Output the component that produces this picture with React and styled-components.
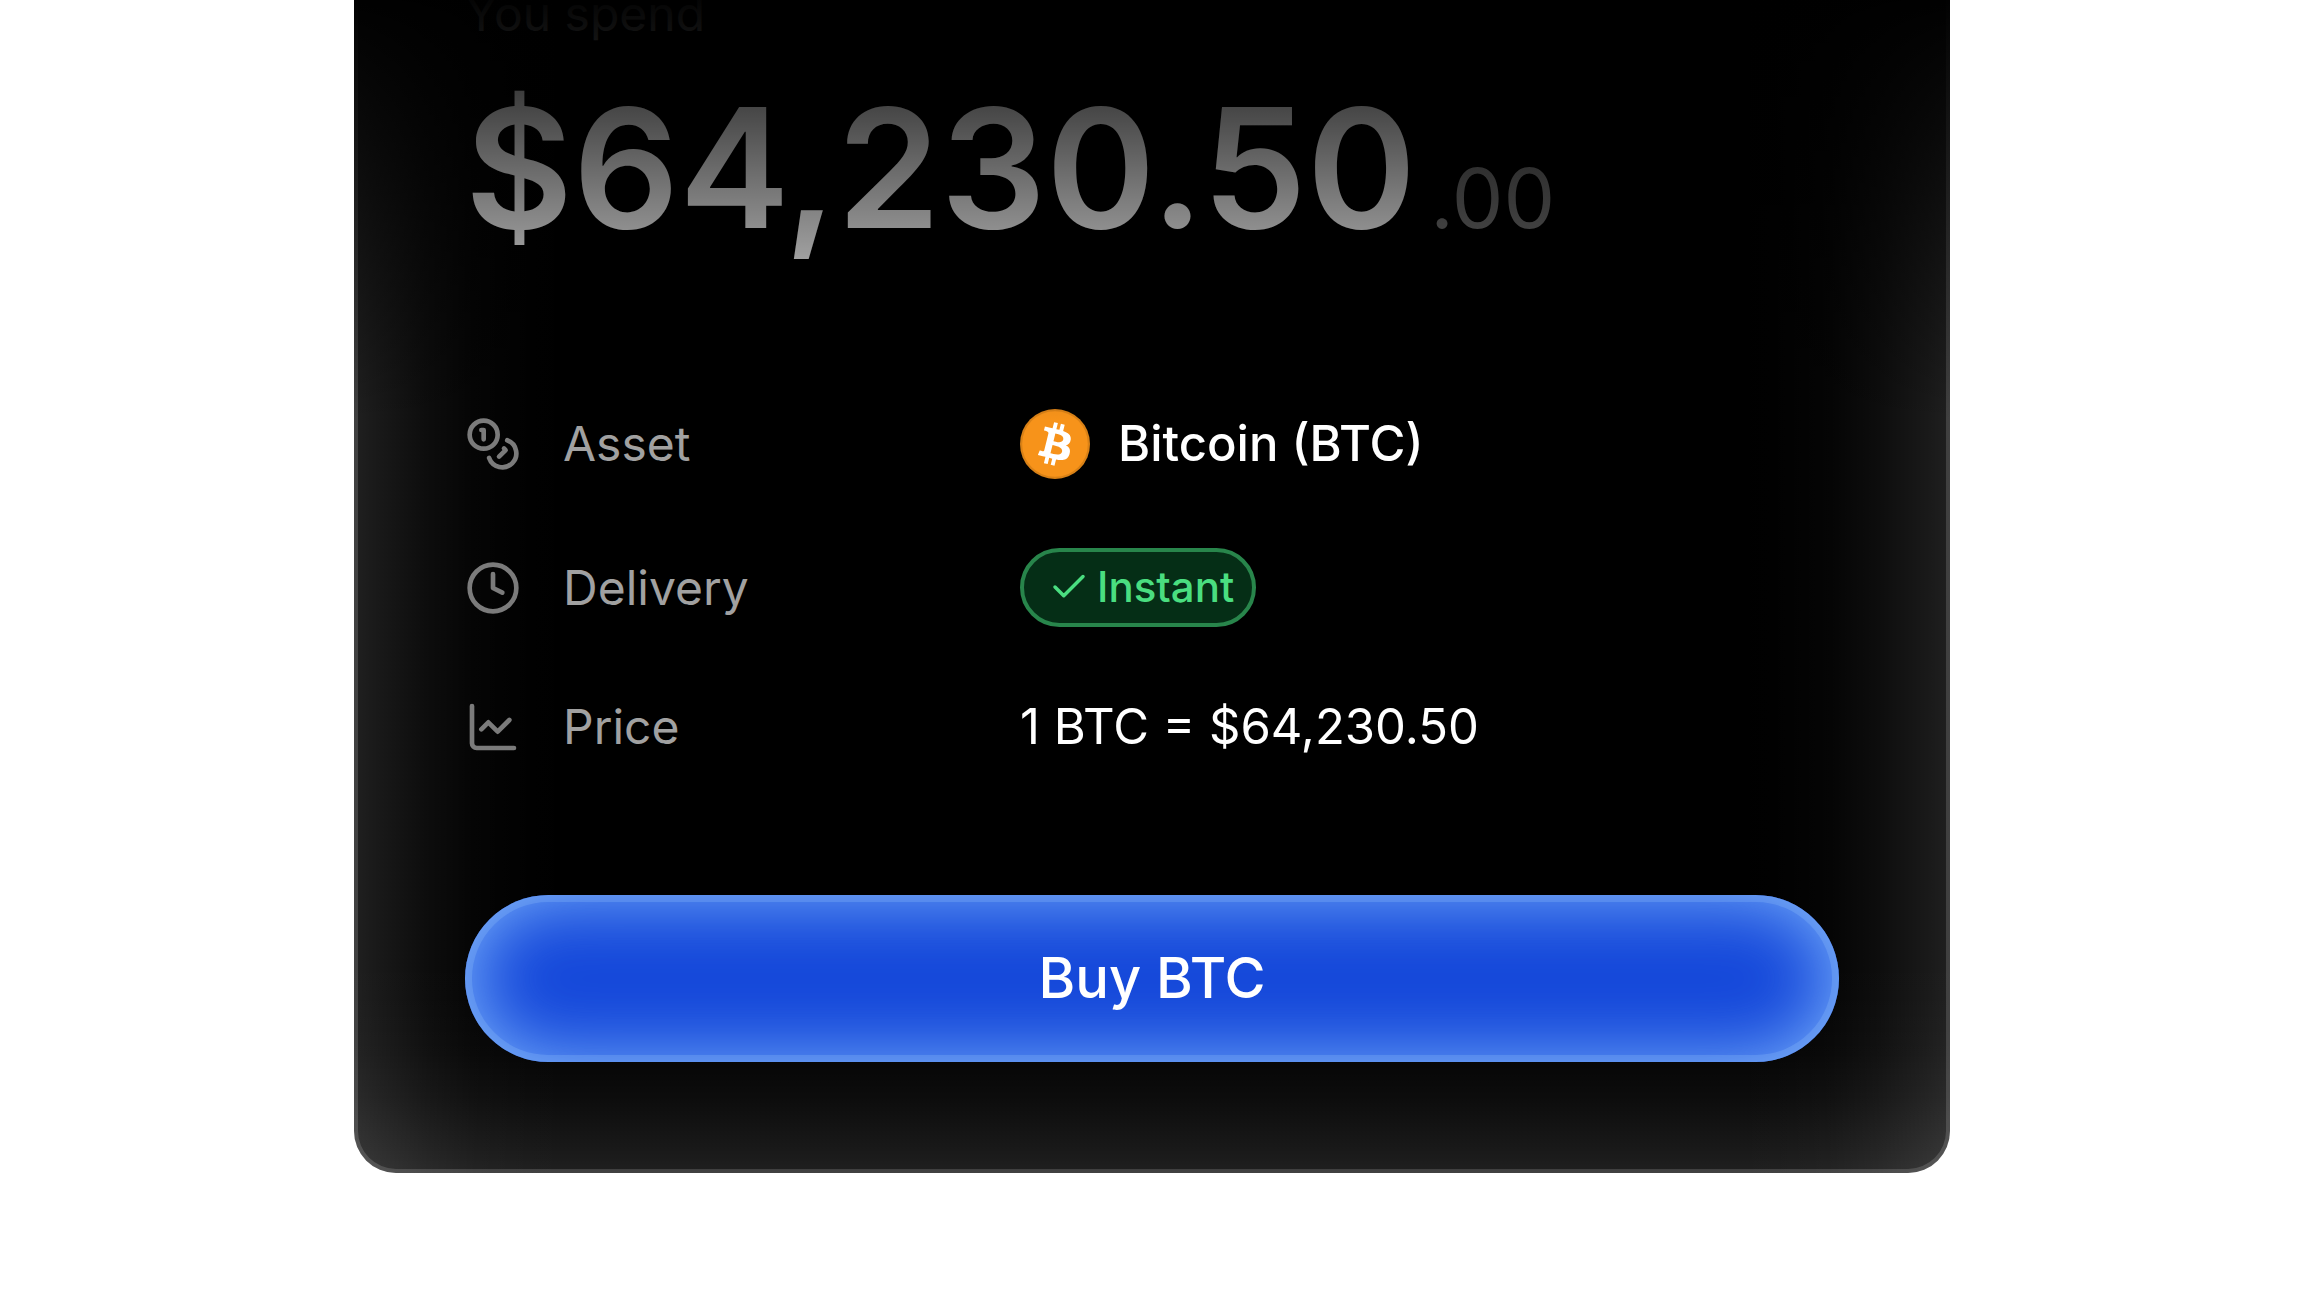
import React from "react";
import styled, {createGlobalStyle} from "styled-components";

const GlobalStyle = createGlobalStyle`
  * {
    box-sizing: border-box;
  }
  body {
    margin: 0;
    background: #ffffff;
    font-family: Inter, "Liberation Sans", sans-serif;
    -webkit-font-smoothing: antialiased;
  }
`;

const Page = styled.main`
  overflow: hidden;
  padding: 0 357px 125px 354px;
`;

// soft falloff of the light along an edge of the card
const glow = `
  rgba(255, 255, 255, 0.125),
  rgba(255, 255, 255, 0.098) 24px,
  rgba(255, 255, 255, 0.074) 48px,
  rgba(255, 255, 255, 0.052) 72px,
  rgba(255, 255, 255, 0.035) 96px,
  rgba(255, 255, 255, 0.021) 120px,
  rgba(255, 255, 255, 0.011) 148px,
  rgba(255, 255, 255, 0.004) 180px,
  rgba(255, 255, 255, 0) 220px
`;

// the top of the card slides out of view and fades to black
const Card = styled.section`
  position: relative;
  margin-top: -133px;
  padding: 111px;
  border-radius: 42px;
  background: linear-gradient(to right, ${glow}),
    linear-gradient(to left, ${glow}),
    linear-gradient(to top, ${glow}),
    #000000;
  box-shadow: inset 0 0 0 4px rgba(255, 255, 255, 0.15);

  &::after {
    content: "";
    position: absolute;
    top: 0;
    left: 0;
    right: 0;
    height: 553px;
    background: linear-gradient(to bottom, #000000 122px, transparent);
    pointer-events: none;
  }
`;

const SpendLabel = styled.div`
  font-size: 48px;
  line-height: 72px;
  color: #a1a1a1;
`;

const Amount = styled.div`
  display: flex;
  align-items: baseline;
  gap: 14px;
  margin-top: 34px;
  font-size: 166px;
  line-height: 168px;
  font-weight: 600;
  color: #ffffff;
`;

const Cents = styled.span`
  font-size: 82px;
  line-height: 84px;
  font-weight: 400;
  color: #737373;
`;

const Details = styled.dl`
  display: flex;
  flex-direction: column;
  gap: 65px;
  margin: 153px 0 133px;
`;

const Row = styled.div`
  display: grid;
  grid-template-columns: 555px 1fr;
  align-items: center;
  line-height: 70px;
`;

const Term = styled.dt`
  display: flex;
  align-items: center;
  gap: 42px;
  font-size: 48px;
  color: #a1a1a1;
`;

const Value = styled.dd`
  display: flex;
  align-items: center;
  gap: 28px;
  margin: 0;
  padding: ${({$roomy}) => ($roomy ? "4px 0" : "0")};
  font-size: 49px;
  font-weight: ${({$strong}) => ($strong ? 500 : 400)};
  color: #ffffff;
`;

const Icon = styled.svg`
  flex: none;
  width: 56px;
  height: 56px;
  fill: none;
  stroke: #7b7b7b;
  stroke-width: 2;
  stroke-linecap: round;
  stroke-linejoin: round;
`;

const CoinLogo = styled.svg`
  flex: none;
  width: 70px;
  height: 70px;
`;

const Badge = styled.span`
  display: inline-flex;
  align-items: center;
  gap: 7px;
  height: 79px;
  padding: 0 18px 2px 24px;
  border: 4px solid #28854b;
  border-radius: 40px;
  background: #052e16;
  font-size: 42px;
  line-height: 56px;
  font-weight: 500;
  color: #4ade80;
`;

const CheckIcon = styled(Icon)`
  width: 42px;
  height: 42px;
  stroke: currentColor;
`;

const BuyButton = styled.button`
  display: block;
  width: 100%;
  height: 167px;
  padding: 0 0 2px;
  border: 0;
  border-radius: 84px;
  background: #1447da;
  box-shadow: inset 0 0 0 7px rgba(147, 197, 253, 0.25),
    inset 0 0 80px #84bcff;
  font-family: inherit;
  font-size: 56px;
  font-weight: 500;
  color: #ffffff;
  cursor: pointer;
`;

const CoinsIcon = () => (
    <Icon viewBox="0 0 24 24" aria-hidden="true">
        <circle cx="8" cy="8" r="6"/>
        <path d="M18.09 10.37A6 6 0 1 1 10.34 18"/>
        <path d="M7 6h1v4"/>
        <path d="m16.71 13.88.7.71-2.82 2.82"/>
    </Icon>
);

const ClockIcon = () => (
    <Icon viewBox="0 0 24 24" aria-hidden="true">
        <circle cx="12" cy="12" r="10"/>
        <path d="M12 6v6l4 2"/>
    </Icon>
);

const ChartIcon = () => (
    <Icon viewBox="0 0 24 24" aria-hidden="true">
        <path d="M3 3v16a2 2 0 0 0 2 2h16"/>
        <path d="m19 9-5 5-4-4-3 3"/>
    </Icon>
);

const BitcoinLogo = () => (
    <CoinLogo viewBox="0 0 32 32" aria-hidden="true">
        <circle cx="16" cy="16" r="16" fill="#f7931a"/>
        <circle cx="16" cy="16" r="15.5" fill="none" stroke="#000000" strokeOpacity="0.12" strokeWidth="1"/>
        <path
            fill="#ffffff"
            d="M23.189 14.02c.314-2.096-1.283-3.223-3.465-3.975l.708-2.84-1.728-.43-.69 2.765c-.454-.114-.92-.22-1.385-.326l.695-2.783L15.596 6l-.708 2.839c-.376-.086-.746-.17-1.104-.26l.002-.009-2.384-.595-.46 1.846s1.283.294 1.256.312c.7.175.826.638.805 1.006l-.806 3.235c.048.012.11.03.18.057l-.183-.045-1.13 4.532c-.086.212-.303.531-.793.41.018.025-1.256-.313-1.256-.313l-.858 1.978 2.25.561c.418.105.828.215 1.231.318l-.715 2.872 1.727.43.708-2.84c.472.127.93.245 1.378.357l-.706 2.828 1.728.43.715-2.866c2.948.558 5.164.333 6.097-2.333.752-2.146-.037-3.385-1.588-4.192 1.13-.26 1.98-1.003 2.207-2.538zm-3.95 5.538c-.533 2.147-4.148.986-5.32.695l.95-3.805c1.172.293 4.929.872 4.37 3.11zm.535-5.569c-.487 1.953-3.495.96-4.47.717l.86-3.45c.975.243 4.118.696 3.61 2.733z"
        />
    </CoinLogo>
);

const App = () => {
    return (
        <Page>
            <GlobalStyle/>
            <Card>
                <SpendLabel>You spend</SpendLabel>
                <Amount>
                    $64,230.50<Cents>.00</Cents>
                </Amount>
                <Details>
                    <Row>
                        <Term><CoinsIcon/>Asset</Term>
                        <Value $roomy $strong><BitcoinLogo/>Bitcoin (BTC)</Value>
                    </Row>
                    <Row>
                        <Term><ClockIcon/>Delivery</Term>
                        <Value>
                            <Badge>
                                <CheckIcon viewBox="0 0 24 24" aria-hidden="true">
                                    <path d="M20 6 9 17l-5-5"/>
                                </CheckIcon>
                                Instant
                            </Badge>
                        </Value>
                    </Row>
                    <Row>
                        <Term><ChartIcon/>Price</Term>
                        <Value>1 BTC = $64,230.50</Value>
                    </Row>
                </Details>
                <BuyButton type="button">Buy BTC</BuyButton>
            </Card>
        </Page>
    );
};

export default App;
